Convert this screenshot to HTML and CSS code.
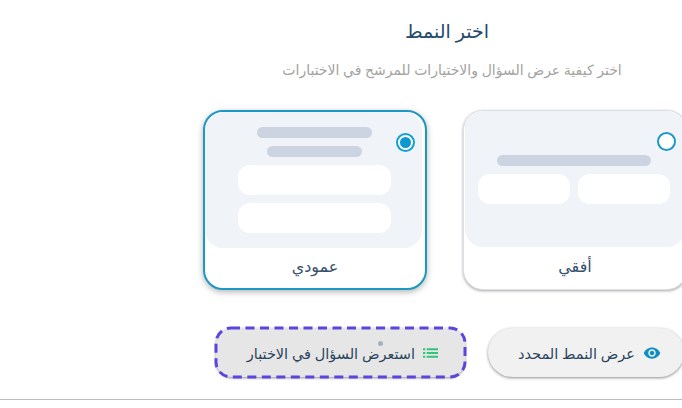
FILE: index.html
```html
<!DOCTYPE html>
<html lang="ar" dir="rtl">
<head>
<meta charset="utf-8">
<title>اختر النمط</title>
<link rel="stylesheet" href="styles.css">
</head>
<body>
<main class="page">
  <section class="panel">
    <h1 class="title">اختر النمط</h1>
    <p class="subtitle">اختر كيفية عرض السؤال والاختيارات للمرشح في الاختبارات</p>
    <div class="cards">
      <div class="card">
        <span class="radio"></span>
        <div class="preview">
          <div class="bar bar-wide"></div>
          <div class="opts-row">
            <div class="opt opt-half"></div>
            <div class="opt opt-half"></div>
          </div>
        </div>
        <div class="card-label">أفقي</div>
      </div>
      <div class="card card-selected">
        <span class="radio radio-on"></span>
        <div class="preview">
          <div class="bar bar-long"></div>
          <div class="bar bar-short"></div>
          <div class="opt opt-full"></div>
          <div class="opt opt-full"></div>
        </div>
        <div class="card-label">عمودي</div>
      </div>
    </div>
    <div class="actions">
      <button class="btn btn-view" type="button">
        <svg class="icon" viewBox="0 0 24 24"><path fill="#0d8fc4" d="M12 4.5C7 4.5 2.73 7.61 1 12c1.73 4.39 6 7.5 11 7.5s9.27-3.11 11-7.5c-1.73-4.39-6-7.5-11-7.5zM12 17c-2.76 0-5-2.24-5-5s2.24-5 5-5 5 2.24 5 5-2.24 5-5 5zm0-8c-1.66 0-3 1.34-3 3s1.34 3 3 3 3-1.34 3-3-1.34-3-3-3z"/></svg>
        <span>عرض النمط المحدد</span>
      </button>
      <button class="btn btn-preview" type="button">
        <svg class="icon icon-list" viewBox="0 0 16 10"><path fill="#35c47c" d="M0 0h2.5v2H0zM4 0h12v2H4zM0 4h2.5v2H0zM4 4h12v2H4zM0 8h2.5v2H0zM4 8h12v2H4z"/></svg>
        <span>استعرض السؤال في الاختبار</span>
        <i class="dot"></i>
        <svg class="focus-ring" viewBox="0 0 255 55"><rect x="3" y="3" width="249" height="49" rx="15" ry="15"/></svg>
      </button>
    </div>
  </section>
  <div class="rule"></div>
</main>
</body>
</html>
```
FILE: styles.css
```css
* { box-sizing: border-box; }
html, body { margin: 0; padding: 0; }
body {
  width: 682px;
  height: 408px;
  overflow: hidden;
  background: #fff;
  font-family: "Noto Sans", "DejaVu Sans", sans-serif;
  color: #2a4460;
}
.page { width: 682px; height: 408px; display: flex; flex-direction: column; overflow: hidden; }
.panel { flex: none; height: 399px; width: 484px; margin-right: -5px; padding-top: 19px; margin-left: 203px; display: flex; flex-direction: column; align-items: center; }
.title { margin: 0 0 0 4px; font-size: 19px; font-weight: 500; line-height: 24px; color: #24496a; }
.subtitle { margin: 15px 0 0 14px; font-size: 14px; line-height: 24px; color: #a3a3a0; white-space: nowrap; }
.cards { display: flex; gap: 36px; margin-top: 28px; }
.card {
  position: relative;
  width: 224px;
  height: 180px;
  padding: 0 1px;
  background: #fff;
  border: 1px solid #dcdfe3;
  border-radius: 20px;
  box-shadow: 0 1px 3px rgba(0, 0, 0, .35);
  overflow: hidden;
  display: flex;
  flex-direction: column;
}
.card-selected { border: 2px solid #1c98c2; padding: 0; box-shadow: 0 2px 6px rgba(0, 0, 0, .3); }
.preview {
  flex: none;
  height: 136px;
  padding-right: 2px;
  background: #f0f4f9;
  border-radius: 0 0 18px 18px;
  display: flex;
  flex-direction: column;
  align-items: center;
  justify-content: center;
  gap: 8px;
}
.card-selected .preview { margin-right: 3px; padding: 0 0 0 2px; border-radius: 18px; }
.bar { height: 11px; border-radius: 6px; background: #cbd4e0; }
.bar-wide { width: 154px; }
.bar-long { width: 115px; }
.bar-short { width: 95px; }
.opts-row { display: flex; gap: 8px; }
.opt { height: 30px; border-radius: 12px; background: #fff; }
.opt-half { width: 92px; }
.opt-full { width: 153px; }
.card-label { flex: 1; padding-bottom: 4px; display: flex; align-items: center; justify-content: center; font-size: 16px; color: #36506c; }
.radio { position: absolute; top: 21px; right: 10px; width: 19px; height: 19px; border: 2px solid #1c98c2; border-radius: 50%; background: #fff; }
.radio-on { top: 21px; right: 10px; border-color: #12a0d2; }
.radio-on::after { content: ""; position: absolute; inset: 2px; border-radius: 50%; background: #0d98d0; }
.actions { align-self: flex-start; display: flex; gap: 23px; margin: 38px 3px 0 0; }
.btn {
  position: relative;
  flex: none;
  height: 49px;
  display: flex;
  align-items: center;
  justify-content: flex-start;
  gap: 8px;
  border: 0;
  border-radius: 25px;
  background: #f1f1f1;
  box-shadow: 0 1px 3px rgba(0, 0, 0, .45);
  font: inherit;
  font-size: 14.5px;
  color: #2a4460;
}
.btn-view { width: 196px; padding: 0 23px 0 0; }
.btn-preview { width: 249px; padding: 0 27px 0 0; background: #e6e6e6; border-radius: 16px; }
.focus-ring { position: absolute; top: -3px; left: -3px; width: 255px; height: 55px; fill: none; stroke: #5a45de; stroke-width: 3; stroke-dasharray: 9 5.5; }
.icon { width: 18px; height: 18px; flex: none; }
.icon-list { width: 15px; height: 10px; }
.dot { position: absolute; top: 13px; left: 162px; width: 5px; height: 5px; border-radius: 50%; background: #a9b0bb; }
.rule { height: 1px; background: #bdbdbd; }
```
